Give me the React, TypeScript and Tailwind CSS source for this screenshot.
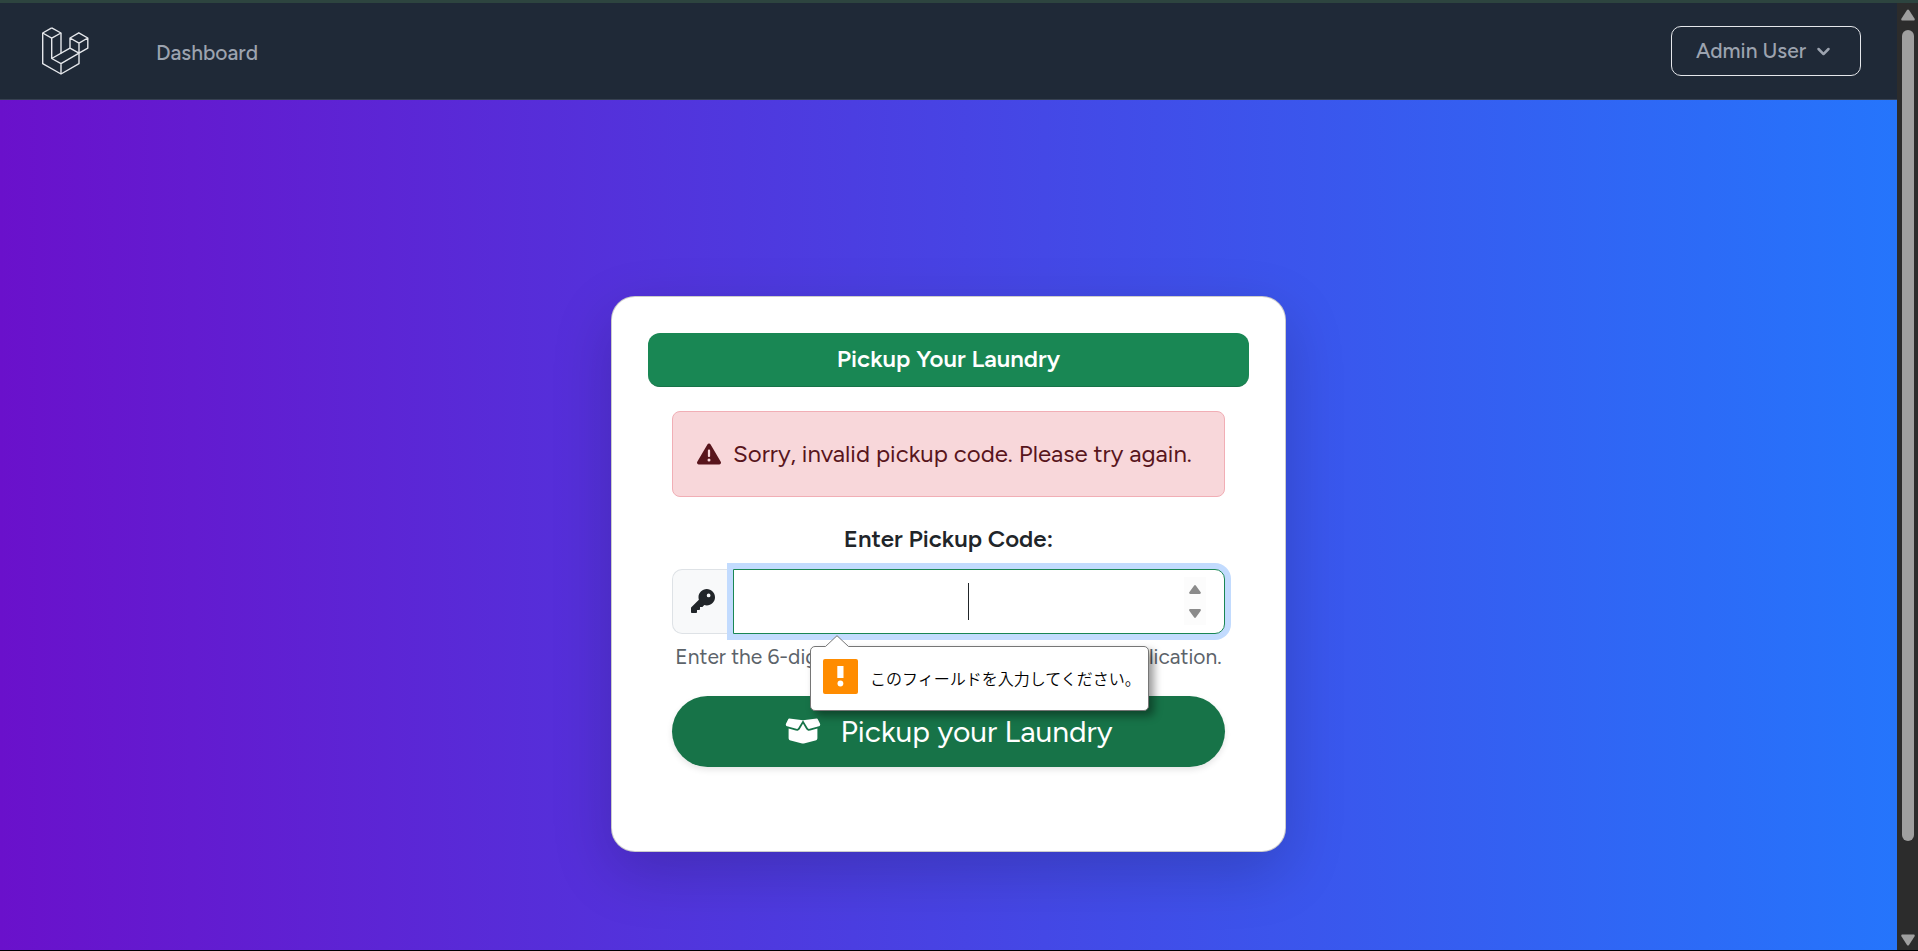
import React from "react";
import { FaBoxOpen, FaKey, FaTriangleExclamation } from "react-icons/fa6";

function Logo() {
  return (
    <svg
      className="h-[50px] w-[60px]"
      viewBox="36 26 60 50"
      fill="none"
      stroke="#e5e7eb"
      strokeWidth="1.4"
      strokeLinejoin="round"
      aria-hidden="true"
    >
      <path d="M51.7 27.9 61 33v20.5M51.7 27.9 42.7 33v30.7L61 74l18-10.3V53.2" />
      <path d="M42.7 33l9 5.2L61 33M51.7 38.2v20.3L61 63.6V74M61 63.6l18-10.4M51.7 58.5 70 48.2" />
      <path d="M78.8 32.8 87.8 38v10.2l-8.8 5L70 48.2V38l8.8-5.2ZM70 38l9 5.2L87.8 38M79 43.2v10" />
    </svg>
  );
}

function Navbar() {
  return (
    <nav className="flex h-[97px] shrink-0 items-center justify-between border-b border-[#374151] bg-[#1f2937] px-9 text-[21px] text-[#9ca3af]">
      <div className="flex items-center gap-[60px]">
        <a href="#home" aria-label="Home">
          <Logo />
        </a>
        <a href="#dashboard" className="pt-1 font-medium">
          Dashboard
        </a>
      </div>
      <button
        type="button"
        className="flex h-[50px] items-center gap-[5px] rounded-[10px] border border-[#e5e7eb] px-6 font-medium"
      >
        Admin User
        <svg className="size-[25px]" viewBox="0 0 20 20" fill="currentColor" aria-hidden="true">
          <path
            fillRule="evenodd"
            clipRule="evenodd"
            d="M5.293 7.293a1 1 0 011.414 0L10 10.586l3.293-3.293a1 1 0 111.414 1.414l-4 4a1 1 0 01-1.414 0l-4-4a1 1 0 010-1.414z"
          />
        </svg>
      </button>
    </nav>
  );
}

function Spinner() {
  return (
    <div className="flex h-12 w-[22px] flex-col bg-[#fcfcfc] text-[#8b8b8b]">
      <button type="button" aria-label="Increase" className="flex flex-1 items-center justify-center">
        <svg className="h-[9px] w-3" viewBox="0 0 12 9" fill="currentColor">
          <path d="M5 .8a1.2 1.2 0 0 1 2 0l4.7 6.4c.5.8 0 1.8-1 1.8H1.3c-1 0-1.5-1-1-1.8Z" />
        </svg>
      </button>
      <button type="button" aria-label="Decrease" className="flex flex-1 items-center justify-center">
        <svg className="h-[9px] w-3 rotate-180" viewBox="0 0 12 9" fill="currentColor">
          <path d="M5 .8a1.2 1.2 0 0 1 2 0l4.7 6.4c.5.8 0 1.8-1 1.8H1.3c-1 0-1.5-1-1-1.8Z" />
        </svg>
      </button>
    </div>
  );
}

function ValidationBubble() {
  return (
    <div
      role="alert"
      className="absolute left-[138px] top-[77px] z-20 flex h-[65px] w-[339px] items-center gap-3 rounded-[5px] border border-[#767676] bg-white px-3 font-['Noto_Sans_CJK_JP',sans-serif] text-[16px] font-[350] text-black shadow-[5px_5px_8px_rgba(0,0,0,0.4)]"
    >
      <svg className="absolute -top-3 left-3.5 h-3 w-6" viewBox="0 0 24 12" aria-hidden="true">
        <path d="M0 12 12 .7 24 12Z" fill="#fff" />
        <path d="M.5 11.5 12 .7 23.5 11.5" fill="none" stroke="#767676" />
      </svg>
      <svg className="-mt-1 size-[35px] shrink-0" viewBox="0 0 35 35" aria-hidden="true">
        <rect width="35" height="35" rx="2" fill="#ff8c00" />
        <path d="M14.3 7h6.2v12h-6.2z" fill="#fff" />
        <circle cx="17.4" cy="24.5" r="2.9" fill="#fff" />
      </svg>
      <span className="whitespace-nowrap">このフィールドを入力してください。</span>
    </div>
  );
}

function PickupCard() {
  return (
    <section className="w-full max-w-[675px] rounded-[24px] border border-black/20 bg-white p-9 text-[#212529] shadow-[0_20px_60px_rgba(0,0,0,0.175)]">
      <h1 className="flex h-[54px] items-center justify-center rounded-[12px] border-b border-[#177348] bg-[#198754] text-[24px] font-semibold text-white">
        Pickup Your Laundry
      </h1>
      <form className="px-6 pt-6 pb-12" onSubmit={(e) => e.preventDefault()}>
        <div
          role="status"
          className="flex h-[86px] items-center gap-3 rounded-[8px] border border-[#f1aeb5] bg-[#f8d7da] px-6 text-[24px] text-[#58151c]"
        >
          <FaTriangleExclamation className="size-6 shrink-0" />
          <span className="whitespace-nowrap">Sorry, invalid pickup code. Please try again.</span>
        </div>
        <label htmlFor="code" className="mt-6 mb-3 block text-center text-[24px] leading-9 font-semibold">
          Enter Pickup Code:
        </label>
        <div className="relative flex h-[65px]">
          <span className="flex w-[61px] items-center justify-center rounded-l-[10px] border border-r-0 border-[#dee2e6] bg-[#f8f9fa]">
            <FaKey className="size-6" />
          </span>
          <div className="relative flex flex-1 items-center rounded-r-[10px] border border-[#198754] bg-white px-[18px] shadow-[0_0_0_6px_#c2dbfe]">
            <div className="relative flex h-full flex-1 items-center">
              <input
                id="code"
                type="number"
                required
                className="w-full appearance-none bg-transparent text-center text-[24px] caret-transparent outline-none [&::-webkit-inner-spin-button]:appearance-none"
              />
              <span className="absolute left-1/2 h-[37px] w-px bg-[#212529]" />
            </div>
            <Spinner />
          </div>
          <ValidationBubble />
        </div>
        <p className="mt-2 mb-6 flex justify-center text-[21px] leading-[30px] whitespace-nowrap text-[#5c636a]">
          Enter the 6-digit pickup code provided in your application.
        </p>
        <button
          type="submit"
          className="flex h-[71px] w-full items-center justify-center gap-5 rounded-full bg-[#177348] text-[30px] text-white shadow-[0_3px_6px_rgba(0,0,0,0.1)]"
        >
          <FaBoxOpen className="size-9" />
          Pickup your Laundry
        </button>
      </form>
    </section>
  );
}

function Scrollbar() {
  return (
    <div className="flex w-[21px] shrink-0 flex-col items-center bg-[#2c2c2c] py-1 text-[#9f9f9f]" aria-hidden="true">
      <svg className="mt-0.5 h-3 w-3.5" viewBox="0 0 14 12" fill="currentColor">
        <path d="M6 1a1.3 1.3 0 0 1 2 0l5.5 8.5c.6 1 .2 2-1 2h-11c-1.2 0-1.6-1-1-2Z" />
      </svg>
      <div className="mt-[9px] mb-[93px] w-3 flex-1 rounded-full bg-[#9f9f9f]" />
      <svg className="h-3 w-3.5 rotate-180" viewBox="0 0 14 12" fill="currentColor">
        <path d="M6 1a1.3 1.3 0 0 1 2 0l5.5 8.5c.6 1 .2 2-1 2h-11c-1.2 0-1.6-1-1-2Z" />
      </svg>
    </div>
  );
}

export default function App() {
  return (
    <div className="flex h-screen flex-col border-t-3 border-b border-t-[#2d443f] border-b-black font-[Figtree,Lato,'Noto_Sans_CJK_JP',sans-serif]">
      <div className="flex min-h-0 flex-1">
        <div className="flex min-w-0 flex-1 flex-col overflow-hidden">
          <Navbar />
          <main className="flex min-h-full shrink-0 items-center justify-center bg-linear-to-r/srgb from-[#6a11cb] to-[#2575fc]">
            <PickupCard />
          </main>
        </div>
        <Scrollbar />
      </div>
    </div>
  );
}
